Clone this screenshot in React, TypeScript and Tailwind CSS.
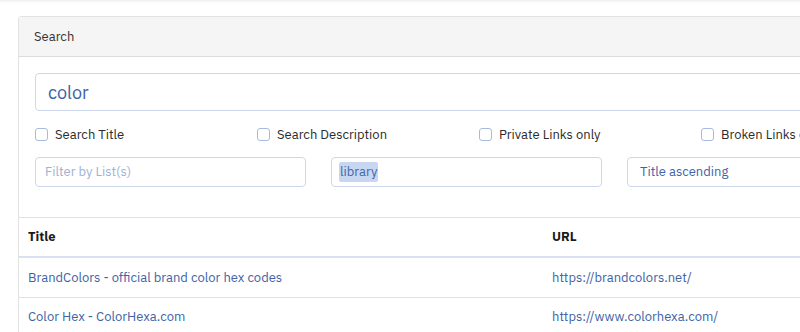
import { useState } from "react";

const links = [
  { title: "BrandColors - official brand color hex codes", url: "https://brandcolors.net/" },
  { title: "Color Hex - ColorHexa.com", url: "https://www.colorhexa.com/" },
];

const options = ["Search Title", "Search Description", "Private Links only", "Broken Links only"];

export default function App() {
  const [query, setQuery] = useState("color");
  const [checked, setChecked] = useState<Record<string, boolean>>({});

  return (
    <div className="h-[332px] overflow-hidden bg-white font-['IBM_Plex_Sans','Noto_Sans',sans-serif] text-[13px] text-[#333]">
      <div className="h-[3px] bg-gradient-to-b from-[#efefef] to-white" />
      <div className="pl-[18px] pt-[13px]">
        <div className="w-[897px] rounded-t-[3px] border border-[#e2e2e2]">
          <div className="flex h-[40px] items-center border-b border-[#dcdcdc] bg-[#f5f5f5] px-[15px] text-[#333]">
            Search
          </div>

          <div className="px-[16px] pt-[16px] pb-[30px]">
            <input
              value={query}
              onChange={(e) => setQuery(e.target.value)}
              className="h-[38px] w-full rounded-[4px] border border-[#cdd8ec] px-[12px] text-[18px] text-[#3e63a6] outline-none"
            />

            <div className="mt-[14px] grid grid-cols-4 gap-[25px]">
              {options.map((o) => (
                <label key={o} className="flex items-center gap-[7px] text-[#2b2b2b]">
                  <input
                    type="checkbox"
                    checked={!!checked[o]}
                    onChange={() => setChecked({ ...checked, [o]: !checked[o] })}
                    className="h-[13px] w-[13px] appearance-none rounded-[3px] border border-[#a9bbdc] bg-white"
                  />
                  <span className="whitespace-nowrap">{o}</span>
                </label>
              ))}
            </div>

            <div className="mt-[12px] grid grid-cols-3 gap-[25px]">
              <input
                placeholder="Filter by List(s)"
                className="h-[30px] rounded-[4px] border border-[#cdd8ec] px-[9px] text-[#3e63a6] placeholder:text-[#9fb1d3] outline-none"
              />
              <div className="flex h-[30px] items-center rounded-[4px] border border-[#cdd8ec] px-[7px]">
                <span className="rounded-[2px] bg-[#c7d7f1] px-[1px] py-[2px] leading-[16px] text-[#4466a6]">library</span>
              </div>
              <div className="flex h-[30px] items-center rounded-[4px] border border-[#cdd8ec] px-[12px] text-[#3e63a6]">
                Title ascending
              </div>
            </div>
          </div>

          <table className="w-full border-collapse text-left">
            <thead>
              <tr className="h-[40px] border-t border-b-2 border-[#d7e1f2]">
                <th className="w-[524px] px-[9px] font-bold text-[#1b1b1b]">Title</th>
                <th className="px-[9px] font-bold text-[#1b1b1b]">URL</th>
              </tr>
            </thead>
            <tbody>
              {links.map((l) => (
                <tr key={l.url} className="h-[40px] border-b border-[#d7e1f2]">
                  <td className="px-[9px] text-[#3e63a6]">{l.title}</td>
                  <td className="px-[9px] text-[#3e63a6]">{l.url}</td>
                </tr>
              ))}
            </tbody>
          </table>
        </div>
      </div>
    </div>
  );
}
